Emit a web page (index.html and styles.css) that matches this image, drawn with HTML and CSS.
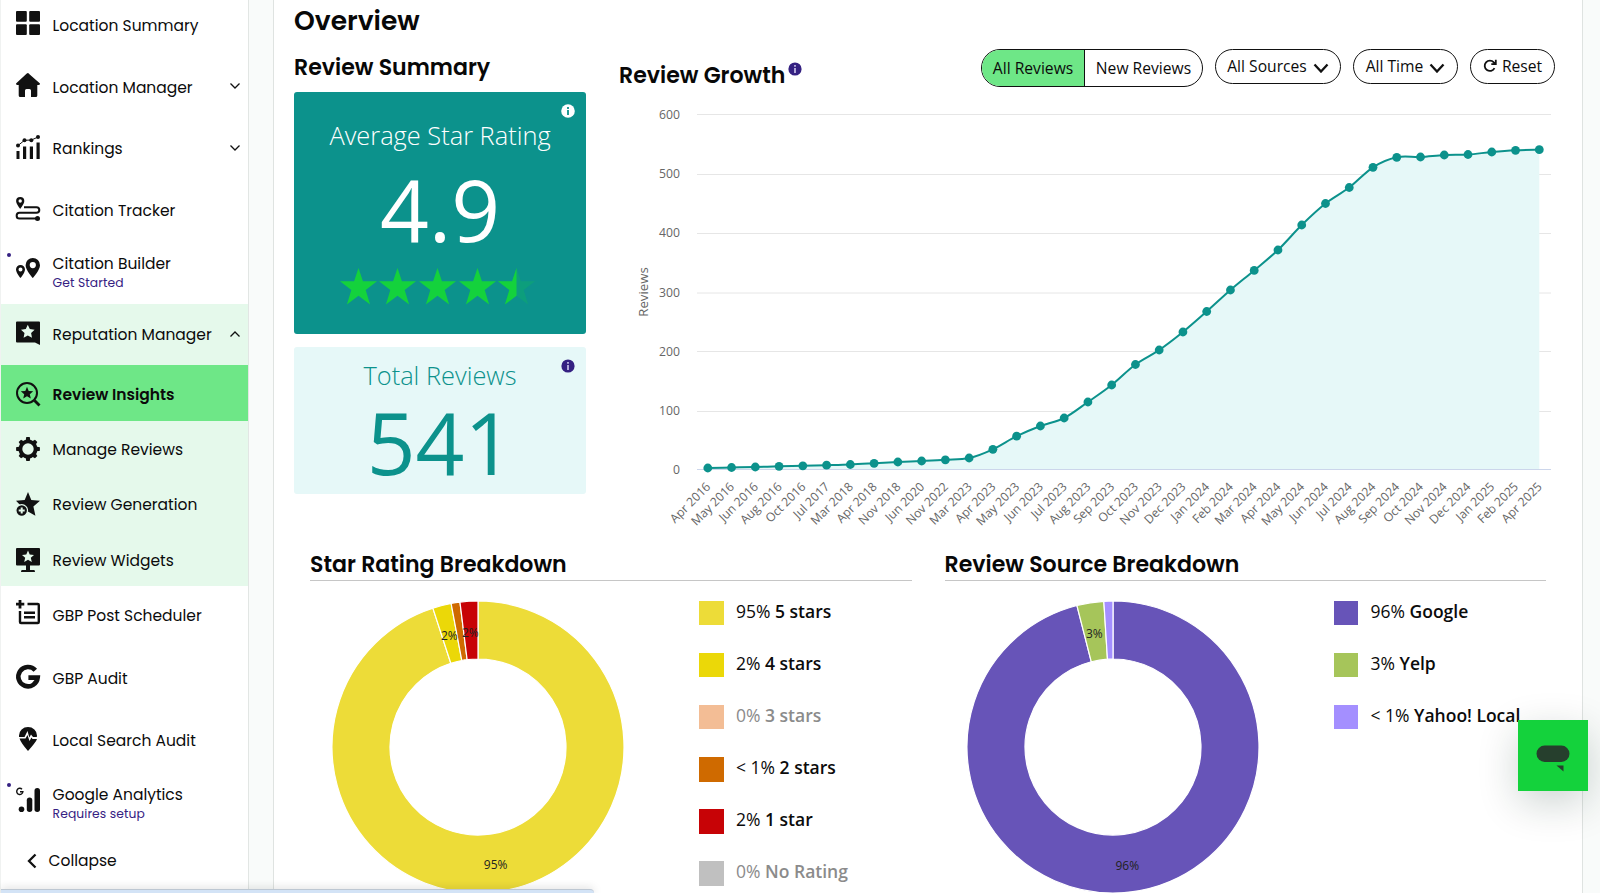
FILE: index.html
```html
<!DOCTYPE html>
<html lang="en">
<head>
<meta charset="utf-8">
<title>Review Insights</title>
<link rel="stylesheet" href="styles.css">
</head>
<body>
<div class="app">
  <nav class="sidebar">
    <a class="item"><svg class="icon" viewBox="0 0 24 24"><rect width="10.8" height="10.8" rx="1"/><rect x="13.2" width="10.8" height="10.8" rx="1"/><rect y="13.2" width="10.8" height="10.8" rx="1"/><rect x="13.2" y="13.2" width="10.8" height="10.8" rx="1"/></svg><span class="label">Location Summary</span></a>
    <a class="item"><svg class="icon" viewBox="0 0 24 24"><path d="M12 0 24 10.5Q24 12 22.500 12H21.300V22.500Q21.300 24 19.800 24H15V17.500Q15 16 13.500 16H10.500Q9 16 9 17.500V24H4.200Q2.700 24 2.700 22.500V12H1.500Q0 12 0 10.500L10.500.700Q12-.600 13.500.700Z"/></svg><span class="label">Location Manager</span><svg class="caret" viewBox="0 0 12 12"><path d="M1.500 3.500 6 8l4.500-4.500"/></svg></a>
    <a class="item"><svg class="icon" viewBox="0 0 24 24"><path d="M.500 16h3v8h-3zM7 11.500h3.200V24H7zM13.800 11.500H17V24h-3.200zM20.500 7.500h3.200V24h-3.200z"/><path class="thin" d="M2 10.500 8.500 5.300 15.500 5 22 2"/><circle cx="2" cy="10.500" r="2"/><circle cx="8.500" cy="5.300" r="2"/><circle cx="15.300" cy="5.200" r="2"/><circle cx="22" cy="2" r="2"/></svg><span class="label">Rankings</span><svg class="caret" viewBox="0 0 12 12"><path d="M1.500 3.500 6 8l4.500-4.500"/></svg></a>
    <a class="item"><svg class="icon" viewBox="0 0 24 24"><path fill-rule="evenodd" d="M4.200 0a4.100 4.100 0 0 1 4.100 4.100C8.300 7 4.200 12 4.200 12S.100 7 .100 4.100A4.100 4.100 0 0 1 4.200 0Zm0 2.300a1.700 1.700 0 1 0 0 3.400 1.700 1.700 0 0 0 0-3.400Z"/><path class="line" d="M8 10.200h12.500a2.700 2.700 0 0 1 0 5.600H3.500a2.700 2.700 0 0 0 0 5.700H21"/><circle cx="21.500" cy="21.500" r="2.500"/></svg><span class="label">Citation Tracker</span></a>
    <a class="item two"><i class="dot"></i><svg class="icon" viewBox="0 0 24 24"><path fill-rule="evenodd" d="M16.800 2a7.200 7.200 0 0 1 7.200 7.200C24 14 16.800 22 16.800 22S9.600 14 9.600 9.200A7.200 7.200 0 0 1 16.800 2Zm0 4a3.100 3.100 0 1 0 0 6.200 3.100 3.100 0 0 0 0-6.200ZM4.500 9A4.500 4.500 0 0 1 9 13.500C9 17 4.500 22 4.500 22S0 17 0 13.500A4.500 4.500 0 0 1 4.500 9Zm0 2.400a2 2 0 1 0 0 4 2 2 0 0 0 0-4Z"/></svg><span class="label">Citation Builder<small>Get Started</small></span></a>
    <div class="group">
      <a class="item"><svg class="icon" viewBox="0 0 24 24"><path fill-rule="evenodd" d="M1 .500h22a1 1 0 0 1 1 1V24l-5-2.500H1a1 1 0 0 1-1-1V1.500a1 1 0 0 1 1-1Zm10.800 3.300-2 4.300-4.800.700 3.500 3.300-.900 4.700 4.200-2.300 4.200 2.300-.900-4.700 3.500-3.300-4.800-.700Z"/></svg><span class="label">Reputation Manager</span><svg class="caret" viewBox="0 0 12 12"><path d="M1.500 8.500 6 4l4.500 4.500"/></svg></a>
      <a class="sub active"><svg class="icon" viewBox="0 0 24 24"><circle class="line" cx="11" cy="11" r="10"/><path class="thick" d="m18.500 18.500 5 5"/><path d="m11 4.800 1.700 4.100 4.500.400-3.400 2.900 1 4.400-3.800-2.400-3.800 2.400 1-4.400-3.400-2.900 4.500-.400Z"/></svg><span class="label">Review Insights</span></a>
      <a class="sub"><svg class="icon" viewBox="0 0 24 24"><circle class="ring" cx="12" cy="12" r="7.600"/><g><path d="M9.500 4 10.300.100h3.400L14.500 4zM9.500 20l.800 3.900h3.400l.800-3.900zM4 9.500.100 10.300v3.400L4 14.500zM20 9.500l3.900.800v3.400l-3.900.800z"/><path transform="rotate(45 12 12)" d="M9.500 4 10.300.500h3.400L14.500 4zM9.500 20l.800 3.500h3.400l.800-3.500zM4 9.500.500 10.300v3.400L4 14.500zM20 9.500l3.500.800v3.400l-3.500.800z"/></g></svg><span class="label">Manage Reviews</span></a>
      <a class="sub"><svg class="icon" viewBox="0 0 24 24"><path d="m12 0 3.300 8 8.700.700-6.600 5.700 2 9.400-7.900-4.500L5 14 0 8.700 8.700 8Z"/><circle class="badge" cx="5.700" cy="18.500" r="5.800"/><path class="plus" d="M5.700 15.500v6M2.700 18.500h6"/></svg><span class="label">Review Generation</span></a>
      <a class="sub"><svg class="icon" viewBox="0 0 24 24"><path fill-rule="evenodd" d="M1 0h22a1 1 0 0 1 1 1v15.500a1 1 0 0 1-1 1h-9V22h4q1 0 1 2H5q0-2 1-2h4v-4.500H1a1 1 0 0 1-1-1V1a1 1 0 0 1 1-1Zm11 2.500-1.700 4-4.300.400 3.200 2.900-1 4.200 3.800-2.200 3.800 2.200-1-4.200L18 6.900l-4.300-.400Z"/></svg><span class="label">Review Widgets</span></a>
    </div>
    <a class="item post"><svg class="icon" viewBox="0 0 24 24"><path class="box" d="M11.500 4H21.800a1 1 0 0 1 1 1V22a1 1 0 0 1-1 1H5a1 1 0 0 1-1-1V11"/><path class="thick" d="M4 0v8.500M0 4.200h8.300"/><path class="box" d="M8 12.700h11M8 17.300h11"/></svg><span class="label">GBP Post Scheduler</span></a>
    <a class="item lower"><svg class="icon" viewBox="0 0 24 24"><path class="gee" d="M19.300 5.200A9.700 9.700 0 1 0 21.700 12.600H12.400"/></svg><span class="label">GBP Audit</span></a>
    <a class="item lower"><svg class="icon" viewBox="0 0 24 24"><path d="M3 8.500A9 8.500 0 0 1 21 8.500L20.800 10H17l-2-2.500-1.700 3L11.500 4 8.500 10H3ZM3.500 11.500H9.500l2-3.500 2 6 2-3.500 1 1.500h4.500Q20 15 12 24 5 16 3.500 11.500Z"/></svg><span class="label">Local Search Audit</span></a>
    <a class="item ga"><i class="dot"></i><svg class="icon" viewBox="0 0 24 24"><path class="minigee" d="M6 1.200A3.100 3.100 0 1 0 6.900 3.700H4"/><circle cx="5.500" cy="21.300" r="2.800"/><rect x="10.800" y="9.500" width="5.500" height="14.500" rx="2.700"/><rect x="18.500" y="0" width="5.500" height="24" rx="2.700"/></svg><span class="label">Google Analytics<small>Requires setup</small></span></a>
    <a class="collapse"><svg viewBox="0 0 10 16"><path d="M8.500 1.500 2 8l6.500 6.500"/></svg><span>Collapse</span></a>
  </nav>

  <main class="panel">
    <section class="top">
      <div class="summary">
        <h1>Overview</h1>
        <h2 class="h-summary">Review Summary</h2>
        <div class="rating">
          <svg class="info" viewBox="0 0 14 14"><circle cx="7" cy="7" r="6.800" fill="#fff"/><path d="M7 3v2M7 6v5" stroke="#0c928c" stroke-width="1.800"/></svg>
          <p class="caption">Average Star Rating</p>
          <p class="number">4.9</p>
          <div class="stars" id="stars"></div>
        </div>
        <div class="total">
          <svg class="info" viewBox="0 0 14 14"><circle cx="7" cy="7" r="6.600" fill="#352182"/><path d="M7 3v1.800M7 6v5" stroke="#d9d4f5" stroke-width="1.500"/></svg>
          <p class="caption">Total Reviews</p>
          <p class="number">541</p>
        </div>
      </div>
      <div class="growth">
        <header class="bar">
          <h2 class="h-growth">Review Growth</h2>
          <svg class="hint" viewBox="0 0 14 14"><circle cx="7" cy="7" r="6.600" fill="#352182"/><path d="M7 3v1.800M7 6v5" stroke="#d9d4f5" stroke-width="1.500"/></svg>
          <div class="filters">
            <div class="toggle"><button class="on">All Reviews</button><button>New Reviews</button></div>
            <button class="pill sources">All Sources <svg viewBox="0 0 16 10"><path d="m1.500 1.500 6.500 7 6.500-7"/></svg></button>
            <button class="pill time">All Time <svg viewBox="0 0 16 10"><path d="m1.500 1.500 6.500 7 6.500-7"/></svg></button>
            <button class="pill reset"><svg class="redo" viewBox="0 0 14 14"><path d="M11.500 9.200A5.200 5.200 0 1 1 10.800 3.300L12.600 5M12.800.700V5.200H8.300"/></svg>Reset</button>
          </div>
        </header>
        <svg class="chart" id="growth" viewBox="619 96 941 444" width="941" height="444"></svg>
      </div>
    </section>
    <section class="bottom">
      <div class="breakdown">
        <h2>Star Rating Breakdown</h2>
        <div class="split">
          <svg class="donut" id="ratings" viewBox="-148 -148 296 296" width="296" height="296"></svg>
          <ul class="legend">
            <li><i class="c5"></i><span>95% <b>5 stars</b></span></li>
            <li><i class="c4"></i><span>2% <b>4 stars</b></span></li>
            <li class="off"><i class="c3"></i><span>0% <b>3 stars</b></span></li>
            <li><i class="c2"></i><span>&lt; 1% <b>2 stars</b></span></li>
            <li><i class="c1"></i><span>2% <b>1 star</b></span></li>
            <li class="off"><i class="c0"></i><span>0% <b>No Rating</b></span></li>
          </ul>
        </div>
      </div>
      <div class="breakdown">
        <h2>Review Source Breakdown</h2>
        <div class="split">
          <svg class="donut" id="sources" viewBox="-148 -148 296 296" width="296" height="296"></svg>
          <ul class="legend">
            <li><i class="google"></i><span>96% <b>Google</b></span></li>
            <li><i class="yelp"></i><span>3% <b>Yelp</b></span></li>
            <li><i class="yahoo"></i><span>&lt; 1% <b>Yahoo! Local</b></span></li>
          </ul>
        </div>
      </div>
    </section>
  </main>
</div>
<div class="chat"><svg viewBox="0 0 34 28" width="34" height="28"><rect x=".500" y=".500" width="33" height="16.500" rx="8.200"/><path d="M20.500 20.500H27.500V26.500Z"/></svg></div>
<div class="status"></div>
<script src="app.js"></script>
</body>
</html>
```

FILE: styles.css
```css
* { box-sizing: border-box; }
body { margin: 0; background: #f9fbfa; color: #0b0b0b; font-family: "Open Sans", sans-serif; }
h1, h2, p, ul { margin: 0; padding: 0; }
button { font: inherit; color: inherit; background: none; border: 0; padding: 0; }
.app { display: flex; width: 1600px; height: 893px; overflow: hidden; }

.sidebar { flex: none; width: 248.500px; height: 893px; border-left: 1px solid #f0f2f1; border-right: 1px solid #e2e6e4; background: #fff; font-family: Poppins, Inter, sans-serif; font-size: 15.500px; margin-right: 24.500px; overflow: hidden; }
.sidebar > .item:first-child { margin-top: -5.700px; }
.item, .sub { display: flex; align-items: center; position: relative; height: 61.8px; padding: 0 7px 0 14.600px; }
.sub { height: 55.2px; }
.icon { flex: none; width: 24px; height: 24px; margin: -4px 13px 0 0; overflow: visible; fill: #111; }
.sub .icon { margin-top: 2px; }
.sub .label { margin-top: 4px; }
.label { flex: 1; line-height: 20px; white-space: nowrap; margin-top: 1px; }
.label small { display: block; font-size: 12.300px; line-height: 18px; letter-spacing: .1px; color: #352182; }
.caret { width: 12px; height: 12px; margin-top: -2px; fill: none; stroke: #111; stroke-width: 1.3; }
.icon .thin, .icon .line, .icon .thick, .icon .ring, .icon .gee, .icon .minigee, .icon .plus, .icon .box { fill: none; stroke: #111; stroke-width: 2; }
.icon .thin { stroke-width: 1; }
.icon .thick { stroke-width: 2.8; }
.icon .box { stroke-width: 2.4; }
.icon .ring { stroke-width: 3.8; }
.icon .gee { stroke-width: 4.6; }
.icon .minigee { stroke-width: 1.4; }
.icon .badge { stroke: #e5f9eb; stroke-width: 1.2; }
.icon .plus { stroke: #e5f9eb; stroke-width: 2; }
.dot { position: absolute; left: 6px; top: 11px; width: 4px; height: 4px; border-radius: 50%; background: #352182; }
.two .icon { margin-top: -8px; }
.two .label { margin-top: 2px; }
.ga .label { margin-top: 6px; }
.ga .icon { margin-top: -2px; }
.ga .dot { top: 13px; }
.group { background: #e5f9eb; margin-top: .7px; height: 282.500px; }
.active { background: #6ee787; font-weight: 600; margin-top: -.3px; }
.item.post { height: 60px; }
.post .icon { margin-top: -8px; }
.post .label { margin-top: 0; }
.lower .label { margin-top: 4px; }
.lower .icon { margin-top: -1px; }
.collapse { display: flex; align-items: center; height: 58px; padding-left: 25.500px; gap: 12px; }
.collapse svg { width: 10px; height: 16px; fill: none; stroke: #111; stroke-width: 2.300; }

.panel { flex: none; width: 1310px; height: 893px; border-left: 1px solid #dfe3e1; border-right: 1px solid #dfe3e1; background: #fff; padding-left: 20px; }
h1, h2 { font-family: Poppins, Inter, sans-serif; font-weight: 600; color: #080808; white-space: nowrap; }
h1 { font-size: 26.500px; line-height: 42px; height: 47px; }
h2 { font-size: 22.080px; line-height: 40px; }
.top { display: flex; height: 545px; gap: 33px; }
.summary { width: 292px; flex: none; }
.h-summary { height: 45px; line-height: 42px; }
.rating, .total { position: relative; border-radius: 3px; text-align: center; }
.rating { height: 242px; background: #0c928c; color: #fff; padding-top: 23px; }
.total { height: 147px; margin-top: 13px; background: #e6f8f8; color: #0c928c; padding-top: 8px; }
.info { position: absolute; right: 11px; top: 11.500px; width: 14px; height: 14px; }
.caption { font-size: 25.400px; font-weight: 300; line-height: 40px; white-space: nowrap; }
.number { font-size: 85.500px; line-height: 110px; }
.rating .number { margin-top: -1px; }
.total .number { line-height: 98px; margin-top: -2px; }
.stars { display: flex; gap: 2.700px; justify-content: center; margin: 4px 5px 0 0; }
.growth { flex: 1; padding-top: 48.500px; }
.bar { display: flex; height: 47.500px; align-items: flex-start; padding-right: 27px; }
.h-growth { line-height: 54px; }
.hint { width: 14px; height: 14px; margin: 13px 0 0 3px; }
.filters { display: flex; gap: 12px; margin-left: auto; font-size: 15.650px; }
.toggle { display: flex; width: 222px; height: 38px; border: 1.500px solid #111; border-radius: 19px; overflow: hidden; }
.toggle button { flex: 1; white-space: nowrap; padding-top: 1px; }
.toggle .on { flex: 0 0 103px; background: #6ee787; border-right: 1px solid #111; }
.pill { display: flex; align-items: center; justify-content: center; height: 35px; border: 1.500px solid #111; border-radius: 18px; white-space: nowrap; gap: 6px; }
.pill svg { width: 16px; height: 10px; margin-top: 3px; fill: none; stroke: #111; stroke-width: 2.300; }
.pill .redo { width: 14px; height: 14px; margin: 0 -1px 0 0; stroke-width: 1.800; }
.sources { width: 126px; }
.time { width: 105px; }
.reset { width: 85px; }
.chart { display: block; }
.chart text, .donut text { font: 12.200px "Open Sans", sans-serif; fill: #666; }
.chart .axis { font-size: 13.200px; }
.donut text { font-size: 12px; fill: #222; }

.bottom { display: flex; gap: 33px; padding-left: 16px; }
.breakdown { width: 601.500px; }
.breakdown h2 { height: 36px; border-bottom: 1px solid #c6c6c6; }
.split { display: flex; }
.donut { flex: none; margin: 17.700px 73px 0 20px; }
.legend { list-style: none; padding-top: 19.500px; font-size: 17.500px; }
.legend li { display: flex; align-items: center; height: 25px; margin-bottom: 27.100px; gap: 12.500px; white-space: nowrap; color: #0b0b0b; }
.legend i { width: 24.500px; height: 24.500px; }
.legend span { margin-top: -5px; }
.legend b { font-weight: 600; }
.legend .off { color: #8b8b8b; }
.c5 { background: #eddc38; }
.c4 { background: #ebd808; }
.c3 { background: #f3bd95; }
.c2 { background: #cf6a00; }
.c1 { background: #c70306; }
.c0 { background: #c0c0c0; }
.google { background: #6754b8; }
.yelp { background: #a6c55a; }
.yahoo { background: #a48fff; }

.chat { position: absolute; left: 1517.500px; top: 720px; width: 70.500px; height: 70.500px; background: #14d23c; box-shadow: 0 12px 40px rgba(0, 40, 30, .2); }
.chat svg { display: block; margin: 24.500px 0 0 18px; fill: #263f2d; }
.status { position: absolute; left: 1px; top: 889px; width: 593px; height: 4px; background: #d3e3f6; border-top: 1px solid #bdc7d2; border-top-right-radius: 4px; box-shadow: 0 0 10px rgba(0, 0, 0, .22); }
```

FILE: app.js
```js
const NS = 'http://www.w3.org/2000/svg';
function add(parent, name, attrs, text) {
  const el = document.createElementNS(NS, name);
  for (const key in attrs) el.setAttribute(key, attrs[key]);
  if (text) el.textContent = text;
  parent.appendChild(el);
  return el;
}

// Star row: four full stars and one half-filled star
const starPath = 'M18 0 22.300 13H36L25 21.300 29.300 35.500 18 27 6.700 35.500 11 21.300 0 13H13.700Z';
const stars = document.getElementById('stars');
for (let i = 0; i < 5; i++) {
  const svg = add(stars, 'svg', { viewBox: '0 0 36 36', width: 37, height: 37 });
  if (i < 4) add(svg, 'path', { d: starPath, fill: '#14d23c' });
  else {
    add(svg, 'path', { d: starPath, fill: '#14d23c', opacity: 0.2 });
    add(svg, 'path', { d: 'M18 0V27L6.700 35.500 11 21.300 0 13H13.700Z', fill: '#14d23c' });
  }
}

// Cumulative review growth
const chart = document.getElementById('growth');
const grid = [[600, 114.5], [500, 174.5], [400, 233.5], [300, 293], [200, 351.5], [100, 411.5], [0, 469.5]];
grid.forEach(([v, y]) => {
  add(chart, 'path', { d: `M697 ${y}H1551`, stroke: v ? '#e6e6e6' : '#ccd6eb', fill: 'none' });
  add(chart, 'text', { x: 680, y: 469.3 - v * 0.5908 + 4.5, 'text-anchor': 'end' }, String(v));
});
add(chart, 'text', { class: 'axis', x: 0, y: 0, 'text-anchor': 'middle', transform: 'translate(647.500 292) rotate(-90)' }, 'Reviews');
const labels = ('Apr 2016,May 2016,Jun 2016,Aug 2016,Oct 2016,Jul 2017,Mar 2018,Apr 2018,Nov 2018,Jun 2020,Nov 2022,Mar 2023,' +
  'Apr 2023,May 2023,Jun 2023,Jul 2023,Aug 2023,Sep 2023,Oct 2023,Nov 2023,Dec 2023,Jan 2024,Feb 2024,Mar 2024,' +
  'Apr 2024,May 2024,Jun 2024,Jul 2024,Aug 2024,Sep 2024,Oct 2024,Nov 2024,Dec 2024,Jan 2025,Feb 2025,Apr 2025').split(',');
const ys = [468, 467.5, 467, 466.3, 465.8, 465.2, 464.5, 463.3, 462, 461, 459.8, 458, 449.3, 436.2, 426, 418, 402, 385,
  364.5, 350, 332, 311.5, 290, 270.4, 250, 225, 203.5, 187.5, 167.3, 157.3, 157, 155, 154.5, 152, 150.3, 149.7];
const pts = ys.map((y, i) => [707.8 + i * 23.757, y]);
let curve = `M${pts[0]}`;
for (let i = 1; i < pts.length; i++) {
  const a = pts[i - 1], b = pts[i], p = pts[i - 2] || a, n = pts[i + 1] || b;
  curve += `C${a[0] + (b[0] - p[0]) / 6} ${a[1] + (b[1] - p[1]) / 6} ${b[0] - (n[0] - a[0]) / 6} ${b[1] - (n[1] - a[1]) / 6} ${b}`;
}
add(chart, 'path', { d: `${curve}V469H707.8Z`, fill: '#e6f8f8' });
add(chart, 'path', { d: curve, fill: 'none', stroke: '#0c928c', 'stroke-width': 2 });
pts.forEach(([x, y], i) => {
  add(chart, 'circle', { cx: x, cy: y, r: 4.4, fill: '#0c928c' });
  add(chart, 'text', { 'text-anchor': 'end', transform: `translate(${x + 3.5} 487.500) rotate(-45)` }, labels[i]);
});

// Donut slices are [start angle, end angle, colour]; labels are [text, x, y]
function donut(id, slices, texts) {
  const svg = document.getElementById(id);
  const at = (deg, r) => `${r * Math.sin(deg * Math.PI / 180)} ${-r * Math.cos(deg * Math.PI / 180)}`;
  slices.forEach(([s, e, fill]) => {
    const large = e - s > 180 ? 1 : 0;
    add(svg, 'path', { d: `M${at(s, 146)}A146 146 0 ${large} 1 ${at(e, 146)}L${at(e, 88)}A88 88 0 ${large} 0 ${at(s, 88)}Z`, fill, stroke: '#fff', 'stroke-width': 1.2 });
  });
  texts.forEach(([t, x, y]) => add(svg, 'text', { x, y: y + 4, 'text-anchor': 'middle' }, t));
}
donut('ratings', [[0, 342, '#eddc38'], [342, 349.4, '#ebd808'], [349.4, 352.9, '#cf6a00'], [352.9, 360, '#c70306']],
  [['2%', -28.7, -111], ['2%', -7.7, -114.5], ['95%', 17.6, 117.5]]);
donut('sources', [[0, 345.7, '#6754b8'], [345.7, 356.4, '#a6c55a'], [356.4, 360, '#a48fff']],
  [['3%', -18.7, -113], ['96%', 14.3, 118.5]]);
```
